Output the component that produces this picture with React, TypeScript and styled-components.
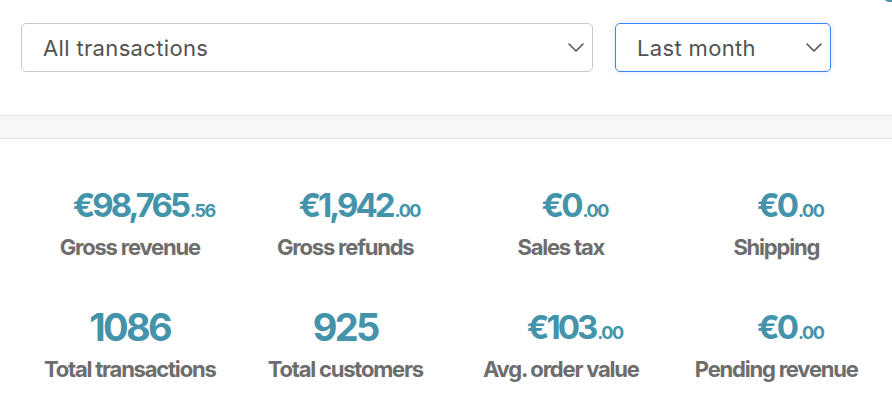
import React from "react";
import styled, { createGlobalStyle } from "styled-components";

const Global = createGlobalStyle`
  html, body { margin: 0; padding: 0; background: #fff; }
  body { font-family: Inter, "Noto Sans", sans-serif; overflow: hidden; }
`;

const Page = styled.div`
  position: relative;
  width: 892px;
  height: 412px;
  background: #fff;
`;

const CornerDot = styled.span`
  position: absolute;
  top: -6px;
  right: -4px;
  width: 12px;
  height: 8px;
  border-radius: 50%;
  background: #4393aa;
`;

const Filters = styled.div`
  display: flex;
  gap: 22px;
  padding: 23px 0 0 21px;
  height: 115px;
  box-sizing: border-box;
`;

const SelectBox = styled.div<{ $w: number; $focus?: boolean }>`
  width: ${(p) => p.$w}px;
  height: 49px;
  box-sizing: border-box;
  display: flex;
  align-items: center;
  justify-content: space-between;
  padding: 0 8px 0 21px;
  border: 1px solid ${(p) => (p.$focus ? "#3a86f0" : "#c9c9c9")};
  border-radius: 5px;
  box-shadow: ${(p) => (p.$focus ? "0 0 6px rgba(59,130,246,0.18)" : "none")};
  font-size: 22px;
  color: #525252;
  letter-spacing: 0.35px;
`;

const Band = styled.div`
  height: 22px;
  background: #f7f7f7;
  border-top: 1px solid #e2e2e2;
  border-bottom: 1px solid #e2e2e2;
`;

const Grid = styled.div`
  display: grid;
  grid-template-columns: repeat(4, 215.5px);
  padding: 43px 0 0 22px;
  row-gap: 44px;
`;

const Stat = styled.div`
  display: flex;
  flex-direction: column;
  align-items: center;
`;

/* Money values carry a leading gutter, so they sit a little right of centre */
const Value = styled.div<{ $plain?: boolean }>`
  height: 46px;
  display: flex;
  align-items: baseline;
  justify-content: center;
  padding-left: ${(p) => (p.$plain ? "0" : "28px")};
  color: #4393aa;
  font-weight: 700;
  font-size: ${(p) => (p.$plain ? "38px" : "33px")};
  letter-spacing: ${(p) => (p.$plain ? "-0.07em" : "-0.09em")};
  line-height: 46px;
`;

const Cents = styled.span`
  font-size: 18px;
  letter-spacing: -0.08em;
  margin-left: 2px;
`;

const Label = styled.div`
  margin-top: 6px;
  color: #6d6d6d;
  font-weight: 700;
  font-size: 22px;
  letter-spacing: -0.055em;
  line-height: 26px;
`;

const Chevron = () => (
  <svg width="16" height="9" viewBox="0 0 16 9" fill="none">
    <path d="M1 1l7 7 7-7" stroke="#555" strokeWidth="1.6" strokeLinecap="round" strokeLinejoin="round" />
  </svg>
);

type StatItem = { label: string; whole: string; cents?: string; plain?: boolean };

const stats: StatItem[] = [
  { label: "Gross revenue", whole: "€98,765", cents: ".56" },
  { label: "Gross refunds", whole: "€1,942", cents: ".00" },
  { label: "Sales tax", whole: "€0", cents: ".00" },
  { label: "Shipping", whole: "€0", cents: ".00" },
  { label: "Total transactions", whole: "1086", plain: true },
  { label: "Total customers", whole: "925", plain: true },
  { label: "Avg. order value", whole: "€103", cents: ".00" },
  { label: "Pending revenue", whole: "€0", cents: ".00" },
];

export default function App() {
  return (
    <Page>
      <Global />
      <CornerDot />
      <Filters>
        <SelectBox $w={572}>
          <span>All transactions</span>
          <Chevron />
        </SelectBox>
        <SelectBox $w={216} $focus>
          <span>Last month</span>
          <Chevron />
        </SelectBox>
      </Filters>
      <Band />
      <Grid>
        {stats.map((s) => (
          <Stat key={s.label}>
            <Value $plain={s.plain}>
              {s.whole}
              {s.cents && <Cents>{s.cents}</Cents>}
            </Value>
            <Label>{s.label}</Label>
          </Stat>
        ))}
      </Grid>
    </Page>
  );
}
